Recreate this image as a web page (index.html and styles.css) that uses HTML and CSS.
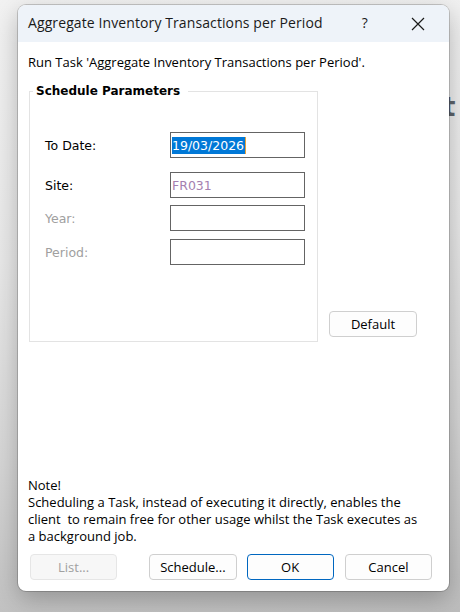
FILE: index.html
```html
<!DOCTYPE html>
<html>
<head>
<meta charset="utf-8">
<link rel="stylesheet" href="styles.css">
</head>
<body>
<div class="backdrop-glyph">t</div>
<div class="window">
  <div class="titlebar">
    <span class="title">Aggregate Inventory Transactions per Period</span>
    <span class="help">?</span>
    <svg class="close" width="14" height="14" viewBox="0 0 14 14"><path d="M1 1 L13 13 M13 1 L1 13" stroke="#1a1a1a" stroke-width="1.2" fill="none"/></svg>
  </div>
  <div class="body">
    <div class="intro">Run Task 'Aggregate Inventory Transactions per Period'.</div>
    <div class="group-row">
      <fieldset class="group">
        <legend>Schedule Parameters</legend>
        <div class="field f-date">
          <label>To Date:</label>
          <div class="input"><span class="sel">19/03/2026</span></div>
        </div>
        <div class="field f-site">
          <label>Site:</label>
          <div class="input site">FR031</div>
        </div>
        <div class="field f-year disabled">
          <label>Year:</label>
          <div class="input"></div>
        </div>
        <div class="field f-period disabled">
          <label>Period:</label>
          <div class="input"></div>
        </div>
      </fieldset>
      <button class="btn default">Default</button>
    </div>
    <div class="note">Note!<br>Scheduling a Task, instead of executing it directly, enables the client&nbsp; to remain free for other usage whilst the Task executes as a background job.</div>
    <div class="buttons">
      <button class="btn list" disabled>List...</button>
      <button class="btn schedule">Schedule...</button>
      <button class="btn ok">OK</button>
      <button class="btn cancel">Cancel</button>
    </div>
  </div>
</div>
</body>
</html>
```

FILE: styles.css
```css
html, body {
  margin: 0;
  padding: 0;
  width: 460px;
  height: 612px;
  overflow: hidden;
}
body {
  background: linear-gradient(175deg, #f2f2f2 0%, #e8e8e8 40%, #d6d6d6 70%, #bdbdbd 100%);
  font-family: "Open Sans", "Noto Sans", sans-serif;
  position: relative;
}
.backdrop-glyph {
  position: absolute;
  left: 443px;
  top: 92px;
  font-family: "DejaVu Sans", sans-serif;
  font-weight: bold;
  font-size: 26px;
  color: #5d636b;
}
.window {
  position: relative;
  margin: 5px 0 0 18px;
  width: 431px;
  height: 586px;
  background: #ffffff;
  border-radius: 8px;
  box-shadow: 0 0 0 1px rgba(0,0,0,0.18), 0 8px 24px rgba(0,0,0,0.25);
  display: flex;
  flex-direction: column;
  overflow: hidden;
}
.titlebar {
  height: 37px;
  background: #eef3f9;
  display: flex;
  align-items: center;
  padding-left: 10px;
  flex: none;
}
.title {
  font-size: 14px;
  color: #1a1a1a;
  letter-spacing: 0.1px;
  padding-bottom: 2px;
}
.help {
  font-size: 14px;
  color: #1a1a1a;
  margin-left: 39px;
  padding-bottom: 2px;
  flex: 1;
}
.close {
  margin-right: 24px;
}
.body {
  flex: 1;
  display: flex;
  flex-direction: column;
  padding: 11px 17px 11px 10px;
}
.intro {
  font-size: 13px;
  line-height: 18px;
  color: #000;
}
.group-row {
  display: flex;
  align-items: flex-end;
  margin-top: 12px;
}
.group {
  margin: 0 0 0 1px;
  padding: 0;
  width: 289px;
  height: 259px;
  box-sizing: border-box;
  border: 1px solid #e3e3e3;
  font-family: "DejaVu Sans", sans-serif;
}
.group legend {
  font-weight: bold;
  font-size: 12px;
  color: #000;
  margin-left: 3px;
  padding: 0 8px 0 3px;
  line-height: 16px;
}
.field {
  display: flex;
  align-items: center;
  padding-left: 15px;
}
.field label {
  width: 125px;
  font-size: 12.5px;
  color: #000;
}
.field.disabled label {
  color: #a0a0a0;
}
.input {
  width: 135px;
  height: 26px;
  box-sizing: border-box;
  border: 1px solid #646464;
  font-size: 12.5px;
  display: flex;
  align-items: center;
  padding-left: 1px;
}
.sel {
  background: #0078d7;
  color: #fff;
  line-height: 17px;
  padding-right: 1px;
  border-right: 1px solid #e8a33a;
}
.input.site {
  color: #a57fb0;
}
.f-date { margin-top: 33px; }
.f-site { margin-top: 14px; }
.f-year { margin-top: 7px; }
.f-period { margin-top: 8px; }
.btn {
  height: 26px;
  width: 88px;
  box-sizing: border-box;
  border: 1px solid #cfcfcf;
  border-radius: 4px;
  background: #fdfdfd;
  font-family: "Open Sans", "Noto Sans", sans-serif;
  font-size: 13px;
  color: #000;
  padding: 0;
}
.default {
  margin-left: 11px;
  margin-bottom: 5px;
}
.note {
  margin-top: auto;
  font-size: 13px;
  line-height: 17px;
  color: #000;
  padding-right: 10px;
}
.buttons {
  display: flex;
  margin-top: 9px;
  padding-left: 2px;
}
.list {
  background: #f7f7f7;
  border-color: #e6e6e6;
  color: #a0a0a0;
}
.schedule { margin-left: 32px; }
.ok {
  margin-left: 10px;
  border-color: #0067c0;
}
.cancel { margin-left: 11px; }
```
